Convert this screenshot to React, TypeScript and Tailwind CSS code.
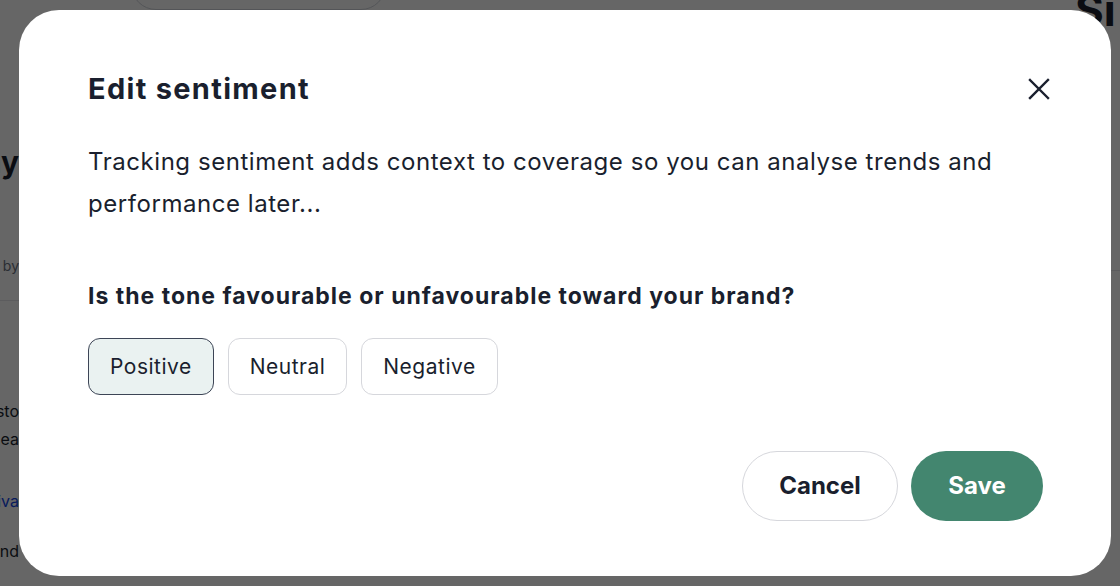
import React, { useState } from 'react';

const options = ['Positive', 'Neutral', 'Negative'];

function CloseIcon() {
  return (
    <svg width="22" height="22" viewBox="0 0 22 22" fill="none" stroke="currentColor" strokeWidth="2.4" strokeLinecap="square">
      <path d="M2 2L20 20M20 2L2 20" />
    </svg>
  );
}

function Backdrop() {
  // dimmed page sitting behind the modal
  return (
    <div className="absolute inset-0 flex bg-white text-[#1a1f2e]">
      <div className="w-[19px] overflow-hidden flex flex-col items-end text-[16px] whitespace-nowrap">
        <div className="mt-[140px] text-[30px] font-bold">ay</div>
        <div className="mt-[70px] text-[14px] text-gray-500">by</div>
        <div className="mt-[24px] w-[19px] border-t border-gray-200" />
        <div className="mt-[96px] text-right leading-7">histo<br />idea</div>
        <div className="mt-[36px] text-blue-700">deliva</div>
        <div className="mt-[26px]">and</div>
      </div>
      <div className="flex-1 pl-[112px]">
        <div className="mt-[-40px] w-[255px] h-[50px] rounded-full border border-gray-300" />
      </div>
      <div className="w-[45px] overflow-hidden flex flex-col text-[44px] font-bold leading-none">
        <div className="mt-[-12px] whitespace-nowrap">Si</div>
        <div className="mt-[30px]">u</div>
        <div className="mt-[16px]">n</div>
        <div className="mt-[62px] text-[20px] font-normal text-green-800 underline whitespace-nowrap">ex</div>
        <div className="mt-[22px] w-full border-t border-gray-200" />
        <div className="mt-[100px] text-[20px] font-normal text-gray-500">in</div>
        <div className="mt-[80px] text-[20px] font-normal text-gray-500">to</div>
      </div>
    </div>
  );
}

export default function App() {
  const [selected, setSelected] = useState('Positive');

  return (
    <div className="relative w-[1120px] h-[586px] overflow-hidden" style={{ fontFamily: 'Inter, "Liberation Sans", sans-serif' }}>
      <Backdrop />
      <div className="absolute inset-0 bg-black/60" />

      <div className="absolute left-[19px] top-[10px] w-[1092px] h-[566px] rounded-[40px] bg-white text-[#1a1f2e] pt-[61px] pl-[69px] pr-[61px] pb-[55px] flex flex-col">
        <div className="flex items-center justify-between">
          <h2 className="text-[29px] font-bold leading-9 tracking-[1.3px]">Edit sentiment</h2>
          <button className="text-[#1a1f2e]">
            <CloseIcon />
          </button>
        </div>

        <p className="mt-[34px] text-[24px] leading-[42px] tracking-[0.55px] pr-[20px]">
          Tracking sentiment adds context to coverage so you can analyse trends and performance later...
        </p>

        <p className="mt-[56px] text-[23px] font-bold leading-[30px] tracking-[1px]">
          Is the tone favourable or unfavourable toward your brand?
        </p>

        <div className="mt-[27px] flex gap-[14px]">
          {options.map((o) => (
            <button
              key={o}
              onClick={() => setSelected(o)}
              className={`h-[57px] px-[21px] rounded-[12px] text-[21px] tracking-[0.5px] ${
                selected === o
                  ? 'bg-[#eaf2f1] border-[1.5px] border-[#3d4556]'
                  : 'bg-white border-[1.5px] border-[#d6d7dc]'
              }`}
            >
              {o}
            </button>
          ))}
        </div>

        <div className="mt-auto flex justify-end gap-[13px] pr-[7px]">
          <button className="h-[70px] w-[156px] rounded-full border-[1.5px] border-[#d6d7dc] text-[24px] font-bold">
            Cancel
          </button>
          <button className="h-[70px] w-[132px] rounded-full bg-[#43866f] text-white text-[24px] font-bold">
            Save
          </button>
        </div>
      </div>
    </div>
  );
}
